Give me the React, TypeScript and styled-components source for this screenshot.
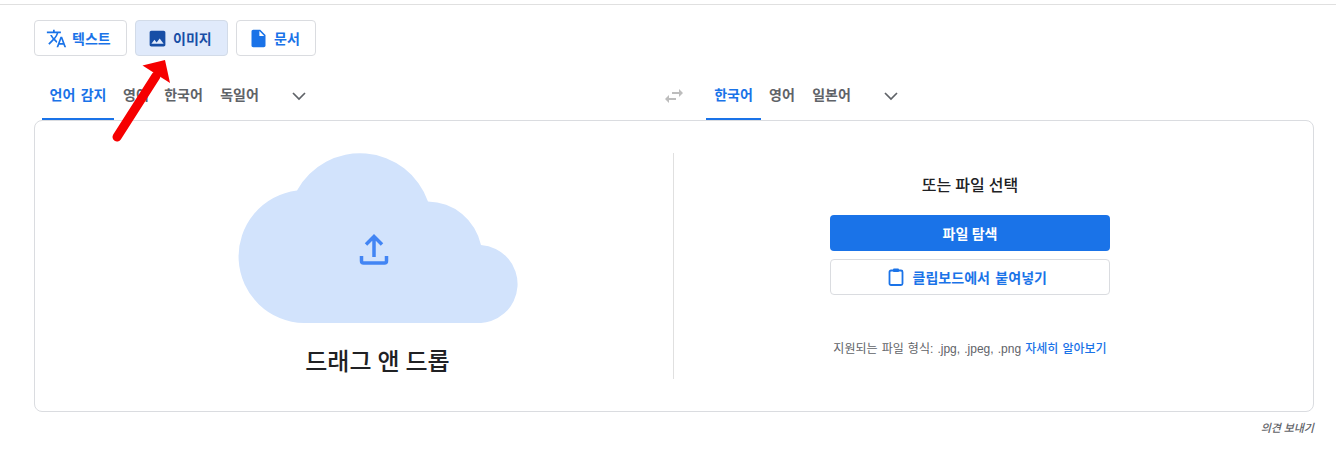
import * as React from 'react';
import styled, { createGlobalStyle } from 'styled-components';
import { MdTranslate, MdImage, MdInsertDriveFile, MdSwapHoriz } from 'react-icons/md';

const GlobalStyle = createGlobalStyle`
  html, body {
    margin: 0;
    background: #fff;
    font-family: Roboto, "Noto Sans CJK KR", sans-serif;
  }
`
const Page = styled.div`
  position: relative;
  width: 1336px;
  height: 462px;
  box-sizing: border-box;
  padding: 20px 22px 0 34px;
  overflow: hidden;
  &::before {
    content: '';
    position: absolute;
    left: 0;
    right: 0;
    top: 4px;
    height: 1px;
    background: #e0e0e0;
  }
`
const ModeBar = styled.div`
  display: flex;
  gap: 8px;
`
const ModeButton = styled.button<{ $active?: boolean; $width: number }>`
  display: flex;
  align-items: center;
  gap: 5.5px;
  width: ${p => p.$width}px;
  height: 36px;
  padding: 0 0 0 10.5px;
  box-sizing: border-box;
  border: 1px solid ${p => p.$active ? '#d2dbe8' : '#dadce0'};
  border-radius: 4px;
  background: ${p => p.$active ? '#e0eafb' : '#fff'};
  color: ${p => p.$active ? '#174ea6' : '#1a73e8'};
  font: 700 14px Roboto, "Noto Sans CJK KR", sans-serif;
`
const LangRow = styled.div`
  display: flex;
  height: 64px;
`
const LangSide = styled.div<{ $width: number }>`
  display: flex;
  align-items: stretch;
  width: ${p => p.$width}px;
  padding-left: 8px;
  box-sizing: border-box;
`
const LangTab = styled.div<{ $active?: boolean; $width: number }>`
  display: flex;
  align-items: center;
  justify-content: center;
  width: ${p => p.$width}px;
  box-sizing: border-box;
  font-size: 14px;
  font-weight: 700;
  word-spacing: 2px;
  padding-top: 14px;
  color: ${p => p.$active ? '#1a73e8' : '#5f6368'};
  border-bottom: 2px solid ${p => p.$active ? '#1a73e8' : 'transparent'};
`
const MoreLang = styled.div<{ $gap: number }>`
  display: flex;
  align-items: center;
  margin-left: ${p => p.$gap}px;
  padding-top: 15px;
  color: #5f6368;
`
const Swap = styled.div`
  display: flex;
  align-items: center;
  width: 36px;
  margin-left: -2px;
  padding-top: 15px;
  color: #bdbdbd;
`
const Card = styled.div`
  display: grid;
  grid-template-columns: 592px 592px;
  width: 1280px;
  height: 292px;
  box-sizing: border-box;
  padding: 32px 47px 33px;
  border: 1px solid #dadce0;
  border-radius: 8px;
`
const DropZone = styled.div`
  display: flex;
  flex-direction: column;
  align-items: center;
  border-right: 1px solid #e0e0e0;
`
const DropTitle = styled.div`
  margin-top: 22px;
  font-size: 24px;
  line-height: 34px;
  font-weight: 500;
  color: #202124;
`
const PickZone = styled.div`
  display: flex;
  flex-direction: column;
  align-items: center;
`
const PickTitle = styled.div`
  margin-top: 23px;
  font-size: 16px;
  line-height: 20px;
  font-weight: 500;
  color: #202124;
`
const PrimaryButton = styled.button`
  width: 280px;
  height: 36px;
  margin-top: 19px;
  border: 0;
  border-radius: 4px;
  background: #1a73e8;
  color: #fff;
  font: 700 14px Roboto, "Noto Sans CJK KR", sans-serif;
`
const PasteButton = styled.button`
  display: flex;
  align-items: center;
  justify-content: center;
  gap: 7.5px;
  width: 280px;
  height: 36px;
  margin-top: 8px;
  padding: 0 6px 1px 0;
  box-sizing: border-box;
  border: 1px solid #dadce0;
  border-radius: 4px;
  background: #fff;
  color: #1a73e8;
  font: 700 14px Roboto, "Noto Sans CJK KR", sans-serif;
  word-spacing: 2px;
`
const Formats = styled.div`
  margin-top: 45px;
  font-family: "Liberation Sans", "Noto Sans CJK KR", sans-serif;
  font-size: 12px;
  line-height: 18px;
  word-spacing: 0.8px;
  color: #5f6368;
  a {
    color: #1a73e8;
    font-weight: 500;
    text-decoration: none;
  }
`
const Feedback = styled.div`
  width: 1280px;
  margin-top: 9px;
  text-align: right;
  font-size: 11px;
  line-height: 16px;
  font-style: italic;
  font-weight: 500;
  color: #5f6368;
`
const RedArrow = styled.svg`
  position: absolute;
  left: 105px;
  top: 55px;
`

const Chevron = () => (
  <svg width="16" height="10" viewBox="0 0 16 10" fill="none">
    <path d="M2 2l6 6 6-6" stroke="currentColor" strokeWidth="1.7" />
  </svg>
)

const Cloud = () => (
  <svg width="280" height="170" viewBox="0 0 280 170">
    <path
      d="M66 170A66.5 66.5 0 0 1 59 37.5A72 72 0 0 1 190 48.5A55 55 0 0 1 243 92A39 39 0 0 1 238 170Z"
      fill="#d2e3fc"
    />
    <path
      d="M136 104V85M128 91.5l8-8 8 8M123.5 103v5a2 2 0 0 0 2 2h21a2 2 0 0 0 2-2v-5"
      fill="none"
      stroke="#4285f4"
      strokeWidth="3.5"
    />
  </svg>
)

const ClipboardIcon = () => (
  <svg width="18" height="20" viewBox="0 0 18 20" fill="none">
    <rect x="2.5" y="3.5" width="13" height="14.5" rx="1.5" stroke="#1a73e8" strokeWidth="1.8" />
    <rect x="6" y="1.5" width="6" height="3.5" rx="1" fill="#1a73e8" />
  </svg>
)

export default function App() {
  return (
    <Page>
      <GlobalStyle />
      <ModeBar>
        <ModeButton $width={93}><MdTranslate size={21} />텍스트</ModeButton>
        <ModeButton $width={93} $active><MdImage size={21} />이미지</ModeButton>
        <ModeButton $width={80}><MdInsertDriveFile size={21} />문서</ModeButton>
      </ModeBar>
      <LangRow>
        <LangSide $width={630}>
          <LangTab $active $width={72}>언어 감지</LangTab>
          <LangTab $width={44}>영어</LangTab>
          <LangTab $width={51}>한국어</LangTab>
          <LangTab $width={61}>독일어</LangTab>
          <MoreLang $gap={21}><Chevron /></MoreLang>
        </LangSide>
        <Swap><MdSwapHoriz size={24} /></Swap>
        <LangSide $width={400}>
          <LangTab $active $width={55}>한국어</LangTab>
          <LangTab $width={42}>영어</LangTab>
          <LangTab $width={57}>일본어</LangTab>
          <MoreLang $gap={23}><Chevron /></MoreLang>
        </LangSide>
      </LangRow>
      <Card>
        <DropZone>
          <Cloud />
          <DropTitle>드래그 앤 드롭</DropTitle>
        </DropZone>
        <PickZone>
          <PickTitle>또는 파일 선택</PickTitle>
          <PrimaryButton>파일 탐색</PrimaryButton>
          <PasteButton><ClipboardIcon />클립보드에서 붙여넣기</PasteButton>
          <Formats>지원되는 파일 형식: .jpg, .jpeg, .png <a href="#">자세히 알아보기</a></Formats>
        </PickZone>
      </Card>
      <Feedback>의견 보내기</Feedback>
      <RedArrow width="70" height="90" viewBox="0 0 70 90">
        <path d="M12 82L51 21" stroke="#f60000" strokeWidth="9" strokeLinecap="round" />
        <path d="M60 5L37.5 10.5L65 28Z" fill="#f60000" />
      </RedArrow>
    </Page>
  )
}
